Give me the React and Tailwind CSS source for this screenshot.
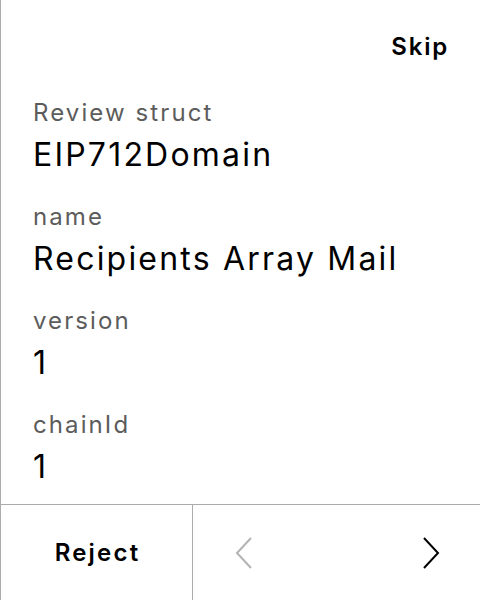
import React from "react";

const fields = [
  { label: "Review struct", value: "EIP712Domain" },
  { label: "name", value: "Recipients Array Mail" },
  { label: "version", value: "1" },
  { label: "chainId", value: "1" },
];

const Chevron = ({ dir, className }) => (
  <svg width="18" height="32" viewBox="0 0 18 32" fill="none" className={className}>
    <path
      d={dir === "left" ? "M16 1L2 16l14 15" : "M2 1l14 15L2 31"}
      stroke="currentColor"
      strokeWidth="2"
    />
  </svg>
);

export default function App() {
  return (
    <div className="h-screen w-full flex flex-col bg-white border-l border-[#ababab] text-black font-['Inter','Noto_Sans',sans-serif]">
      <div className="flex justify-end pt-[31px] pr-[31px]">
        <button className="text-[24px] leading-[32px] font-semibold tracking-[1.8px]">Skip</button>
      </div>

      <div className="flex-1 flex flex-col gap-[26px] pl-[32px] pt-[34px]">
        {fields.map((f) => (
          <div key={f.label} className="flex flex-col gap-[6px]">
            <div className="text-[24px] leading-[32px] text-[#5c5c5c] tracking-[2.1px]">{f.label}</div>
            <div className="text-[32px] leading-[40px] tracking-[2.2px]">{f.value}</div>
          </div>
        ))}
      </div>

      <div className="h-[96px] flex border-t border-[#ababab]">
        <button className="w-[192px] shrink-0 border-r border-[#ababab] text-[24px] font-semibold tracking-[2.2px] pl-[2px]">
          Reject
        </button>
        <div className="flex-1 flex items-center justify-between pl-[42px] pr-[40px]">
          <Chevron dir="left" className="text-[#b3b3b3]" />
          <Chevron dir="right" className="text-black" />
        </div>
      </div>
    </div>
  );
}
